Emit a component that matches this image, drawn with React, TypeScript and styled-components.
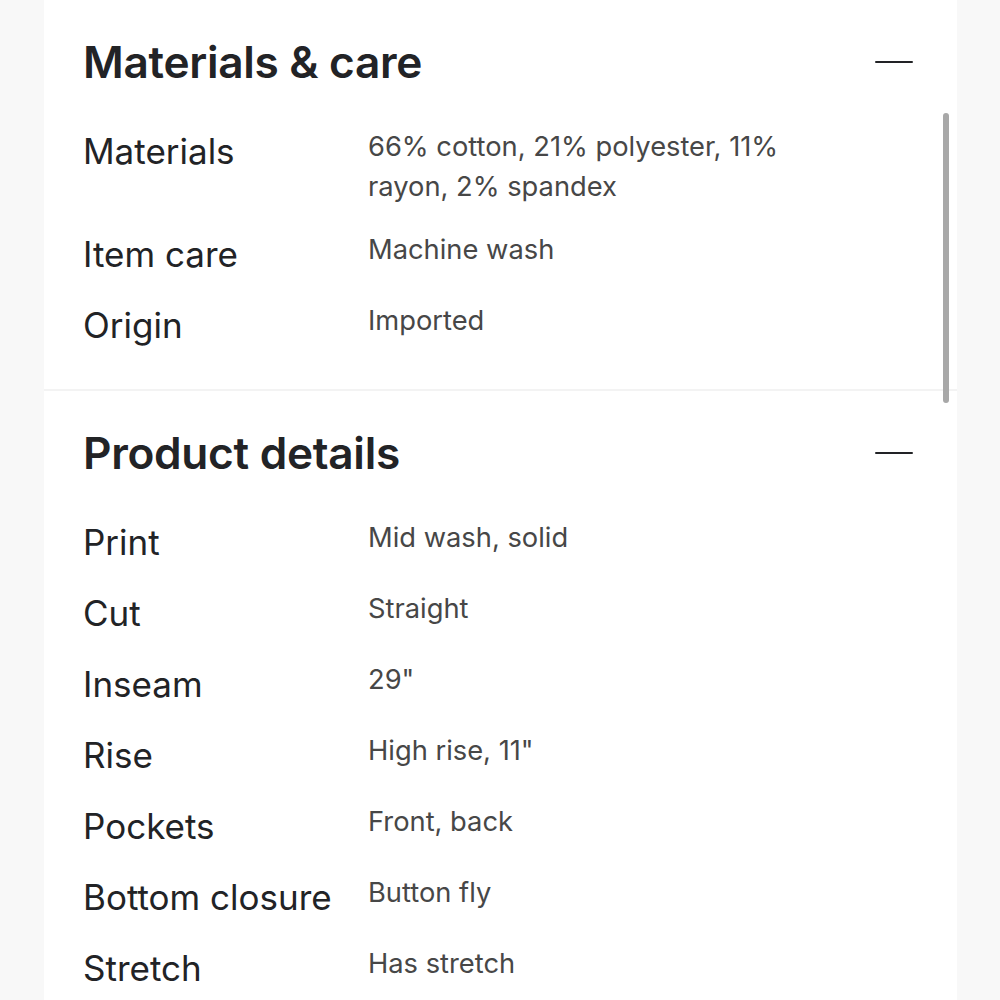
import React from "react";
import styled, { createGlobalStyle } from "styled-components";

const Global = createGlobalStyle`
  html, body { margin: 0; padding: 0; background: #f8f8f8; }
  body { font-family: "Inter", "Noto Sans", sans-serif; }
`;

const Page = styled.div`
  position: relative;
  width: 1000px;
  height: 1000px;
  overflow: hidden;
  padding-left: 44px;
  box-sizing: border-box;
`;

const Panel = styled.div`
  width: 913px;
  min-height: 1000px;
  background: #ffffff;
`;

const Section = styled.section<{ $divider?: boolean }>`
  padding: 34px 44px 40px 39px;
  border-bottom: ${(p) => (p.$divider ? "2px solid #f3f3f3" : "none")};
`;

const Header = styled.div`
  display: flex;
  align-items: center;
  justify-content: space-between;
  height: 56px;
  margin-bottom: 37px;
`;

const Title = styled.h2`
  margin: 0;
  font-size: 44.2px;
  line-height: 56px;
  font-weight: 600;
  color: #222326;
  letter-spacing: -0.3px;
`;

const Minus = styled.span`
  display: block;
  width: 38px;
  height: 2.5px;
  background: #222326;
  border-radius: 1px;
`;

const Rows = styled.div`
  display: flex;
  flex-direction: column;
  gap: 23px;
`;

const Row = styled.div`
  display: grid;
  grid-template-columns: 285px 1fr;
  align-items: start;
`;

const Label = styled.div`
  font-size: 35px;
  line-height: 48px;
  color: #222326;
  font-weight: 400;
`;

const Value = styled.div`
  font-size: 27.3px;
  line-height: 40px;
  color: #474747;
  font-weight: 400;
  max-width: 430px;
`;

const Scrollbar = styled.div`
  position: absolute;
  left: 943px;
  top: 113px;
  width: 6px;
  height: 290px;
  border-radius: 3px;
  background: #a8a8a8;
`;

const materials: [string, string][] = [
  ["Materials", "66% cotton, 21% polyester, 11% rayon, 2% spandex"],
  ["Item care", "Machine wash"],
  ["Origin", "Imported"],
];

const details: [string, string][] = [
  ["Print", "Mid wash, solid"],
  ["Cut", "Straight"],
  ["Inseam", "29\""],
  ["Rise", "High rise, 11\""],
  ["Pockets", "Front, back"],
  ["Bottom closure", "Button fly"],
  ["Stretch", "Has stretch"],
];

function Block({ title, items, divider }: { title: string; items: [string, string][]; divider?: boolean }) {
  return (
    <Section $divider={divider}>
      <Header>
        <Title>{title}</Title>
        <Minus />
      </Header>
      <Rows>
        {items.map(([k, v]) => (
          <Row key={k}>
            <Label>{k}</Label>
            <Value>{v}</Value>
          </Row>
        ))}
      </Rows>
    </Section>
  );
}

export default function App() {
  return (
    <Page>
      <Global />
      <Panel>
        <Block title="Materials & care" items={materials} divider />
        <Block title="Product details" items={details} />
      </Panel>
      <Scrollbar />
    </Page>
  );
}
